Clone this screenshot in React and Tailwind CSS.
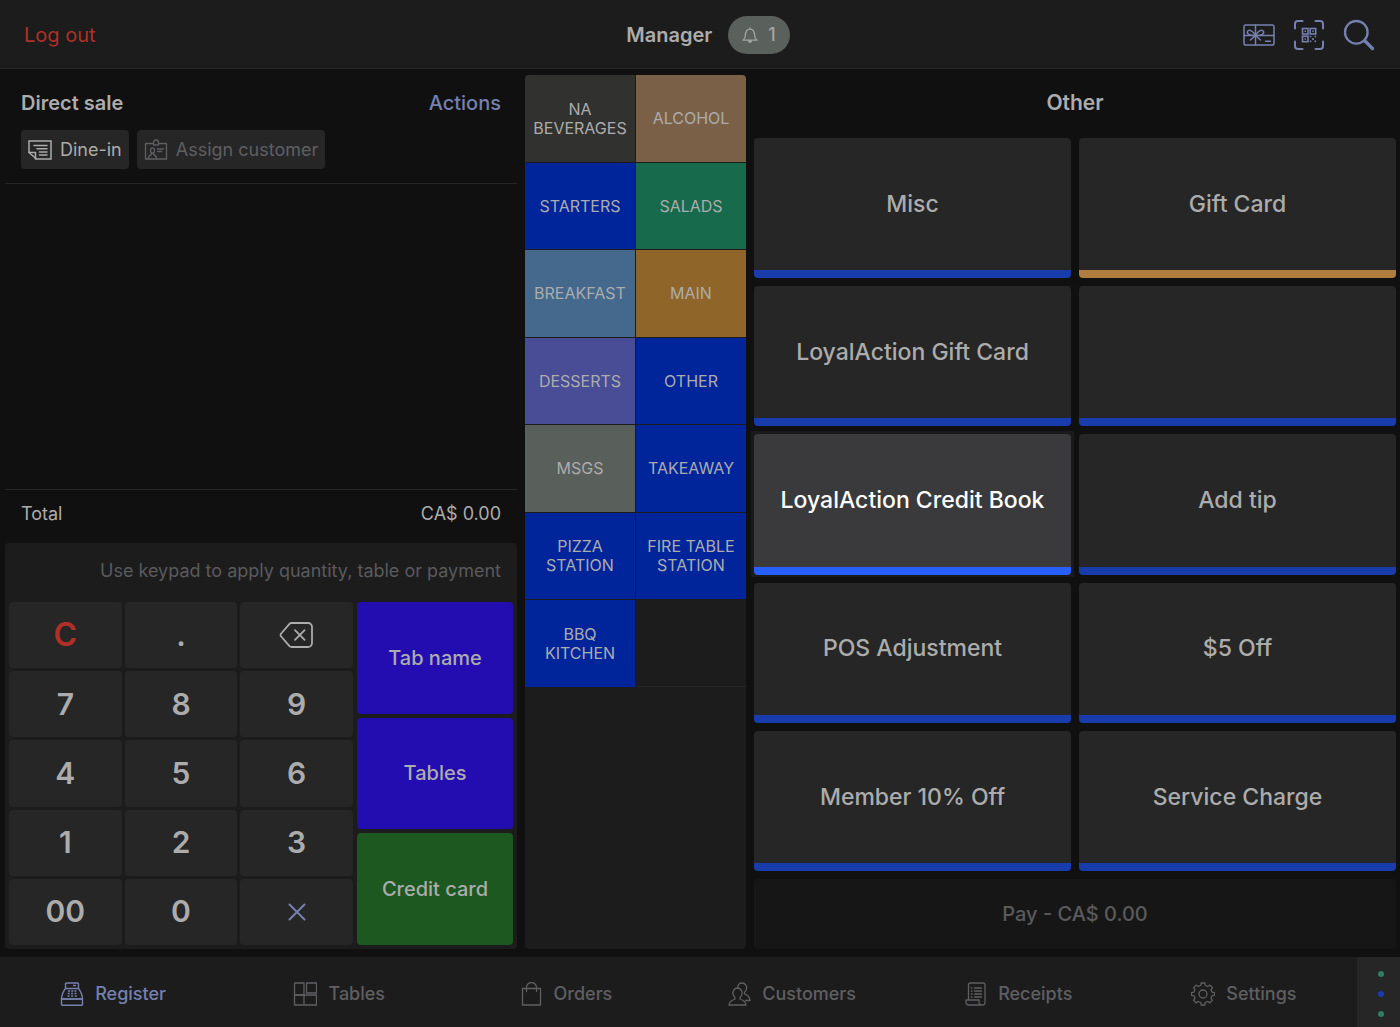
import React from "react";

function Icon({ className, viewBox = "0 0 24 24", width = 1.4, children }) {
  return (
    <svg
      className={className}
      viewBox={viewBox}
      fill="none"
      stroke="currentColor"
      strokeWidth={width}
      strokeLinecap="round"
      strokeLinejoin="round"
      aria-hidden="true"
    >
      {children}
    </svg>
  );
}

const BellIcon = () => (
  <Icon className="h-4 w-4" viewBox="0 0 16 16" width={1.3}>
    <path d="M8 1v1M1 13.2h14c-1.7-1.3-2.2-2.4-2.3-4.4C12.5 5 11.2 2.2 8 2.2S3.500 5 3.300 8.800C3.200 10.800 2.700 11.900 1 13.200z" />
    <path d="M6.5 13.800a1.500 1.500 0 0 0 3 0z" fill="currentColor" />
  </Icon>
);

const GiftCardIcon = () => (
  <Icon className="h-6 w-8" viewBox="0 0 32 24" width={1.5}>
    <rect x="1" y="2" width="30" height="20" rx="1.8" />
    <path d="M12.5 2v20M1 12.5h30" />
    <path d="M12.5 12.5C10 7.500 5.500 6 4.500 8.500s3 4.500 8 4zM12.500 12.500C15 7.500 19.500 6 20.500 8.500s-3 4.500-8 4z" />
    <path d="M12.5 12.5l-5 4.500M12.500 12.500l5 4.500M22.500 18.300h5" />
  </Icon>
);

const QrIcon = () => (
  <Icon className="h-8 w-8" viewBox="0 0 32 32" width={2}>
    <path d="M2 9.5V5a3 3 0 0 1 3-3h4.500M22.500 2H27a3 3 0 0 1 3 3v4.500M30 22.500V27a3 3 0 0 1-3 3h-4.500M9.500 30H5a3 3 0 0 1-3-3v-4.500" />
    <g strokeWidth="1.6" strokeLinejoin="miter">
      <rect x="9.5" y="9.5" width="5.5" height="5.5" />
      <rect x="17.2" y="9.5" width="5.5" height="5.5" />
      <rect x="9.5" y="17.2" width="5.5" height="5.5" />
    </g>
    <g fill="currentColor" stroke="none">
      <rect x="11.5" y="11.5" width="1.5" height="1.5" />
      <rect x="19.2" y="11.5" width="1.5" height="1.5" />
      <rect x="11.5" y="19.2" width="1.5" height="1.5" />
      <rect x="16.7" y="16.7" width="1.6" height="1.6" />
      <rect x="21.5" y="16.7" width="1.6" height="1.6" />
      <rect x="19.1" y="19.1" width="1.8" height="1.8" />
      <rect x="16.7" y="21.5" width="1.6" height="1.6" />
      <rect x="21.5" y="21.5" width="1.6" height="1.6" />
    </g>
  </Icon>
);

const SearchIcon = () => (
  <Icon className="h-8 w-8" viewBox="0 0 32 32" width={2.3}>
    <circle cx="13.3" cy="13.3" r="11.3" />
    <path d="M22 22l7.500 7.500" strokeWidth="3.2" />
  </Icon>
);

const NoteIcon = () => (
  <Icon className="h-6 w-6" width={1.5}>
    <path d="M1 3h22v18H8.500L1 14.500z" strokeLinejoin="miter" />
    <path d="M1 14.5h6.500V21M6 7.500h13M9 10.700h10M11.500 13.900H19M11.500 17.100H19" />
  </Icon>
);

const BadgeIcon = () => (
  <Icon className="h-6 w-6" width={1.3}>
    <path d="M9.5 5.500H1.500v15.500h21V5.500h-8" />
    <path d="M9.5 7V4.500a2.500 2.500 0 0 1 5 0V7z" />
    <path d="M13.5 11h6M13.500 13.500h4" />
    <ellipse cx="8.5" cy="12.5" rx="2" ry="2.6" />
    <path d="M4.5 20.500c0-3 1.500-3.600 3-4.200v-1.500M9.500 14.800v1.500c1.500.6 3 1.200 3 4.200" />
  </Icon>
);

const BackspaceIcon = () => (
  <Icon className="h-7 w-9" viewBox="0 0 36 28" width={1.8}>
    <path d="M12.500 2H29a4 4 0 0 1 4 4v16a4 4 0 0 1-4 4H12.500a3 3 0 0 1-2-.8L2.200 15.500a2 2 0 0 1 0-3L10.500 2.800a3 3 0 0 1 2-.8z" />
    <path d="M16 9.200l9.600 9.600M25.600 9.200L16 18.800" />
  </Icon>
);

const TimesIcon = () => (
  <Icon className="h-5 w-5" viewBox="0 0 20 20" width={2}>
    <path d="M2.500 2.500l15 15M17.500 2.500l-15 15" />
  </Icon>
);

const RegisterIcon = () => (
  <Icon className="h-6 w-6" width={1.4}>
    <path d="M5.500 6.500V2a1 1 0 0 1 1-1h11a1 1 0 0 1 1 1v4.500M5.500 6.500h13c2.500 3 3.700 6.500 4 10.500h-21c.3-4 1.500-7.500 4-10.500z" />
    <path d="M1.500 17h21v5.500a.7.700 0 0 1-.7.700H2.200a.7.700 0 0 1-.7-.700zM13.500 3.500h2" />
    <path
      d="M8 9h2M11.200 9h2M14.400 9h2M7.700 11.500h2M11.100 11.500h2M14.500 11.500h2M7.500 14h2M11.100 14h2M14.800 14h2"
      strokeLinecap="butt"
    />
  </Icon>
);

const TablesIcon = () => (
  <Icon className="h-6 w-6" width={1.3}>
    <rect x="1.500" y="1" width="9.500" height="12" />
    <rect x="13.500" y="1" width="10" height="10" />
    <path d="M1.500 13h22v10h-22zM11 13v10" />
  </Icon>
);

const OrdersIcon = () => (
  <Icon className="h-6 w-6" width={1.3}>
    <path d="M3.500 6.500h18V23h-18zM7.500 9.500V5.500a5 5 0 0 1 10 0v4" />
  </Icon>
);

const CustomersIcon = () => (
  <Icon className="h-6 w-6" width={1.3}>
    <path d="M10.500 6C7 6 5.500 9.500 6 12c.3 1.600 1 2.700 2 3.500v1.500c-3 1-5.500 2-6 6h17c-.5-4-3-5-6-6v-1.500c1-.8 1.700-1.900 2-3.500.5-2.500-1-6-4.500-6z" />
    <path d="M10.500 6c.2-3 2-5 4.500-5 3.500 0 5 3 4.500 5.800-.3 1.700-1 2.700-2 3.500v1.500c3 1 5.200 2.700 5.500 6.700h-4.500" />
  </Icon>
);

const ReceiptsIcon = () => (
  <Icon className="h-6 w-6" width={1.3}>
    <path d="M5.500 18V3a2 2 0 0 1 2-2H20a2 2 0 0 1 2 2v17.500a2.500 2.500 0 0 1-2.500 2.500H6a3 3 0 0 1-3-3v-2h13v2.200A2.800 2.800 0 0 0 19 23" />
    <path d="M11.500 6h7M11.500 9h7M11.500 12h7M11.500 15h7" />
    <path d="M8.500 6h.4M8.500 9h.4M8.500 12h.4M8.500 15h.4" strokeWidth="1.7" />
  </Icon>
);

const SettingsIcon = () => (
  <Icon className="h-6 w-6" width={1.3}>
    <circle cx="12" cy="12" r="4" />
    <path d="M9.700 3.500L10.200 1h3.600l.5 2.500 2.400 1 2.200-1.400 2.500 2.500-1.400 2.200 1 2.400 2.500.500v2.600l-2.500.500-1 2.400 1.400 2.200-2.500 2.500-2.200-1.400-2.400 1-.5 2.500h-3.600l-.5-2.500-2.400-1-2.200 1.400-2.500-2.500 1.400-2.200-1-2.400-2.500-.500v-2.600l2.500-.500 1-2.400-1.400-2.200 2.500-2.500 2.200 1.400z" />
  </Icon>
);

const categories = [
  ["NA BEVERAGES", "bg-[#31312f]"],
  ["ALCOHOL", "bg-[#7b6048]"],
  ["STARTERS", "bg-[#00259b]"],
  ["SALADS", "bg-[#176a4b]"],
  ["BREAKFAST", "bg-[#44698d]"],
  ["MAIN", "bg-[#906529]"],
  ["DESSERTS", "bg-[#494d96]"],
  ["OTHER", "bg-[#00259b]"],
  ["MSGS", "bg-[#595f5a]"],
  ["TAKEAWAY", "bg-[#00259b]"],
  ["PIZZA STATION", "bg-[#00259b]"],
  ["FIRE TABLE STATION", "bg-[#00259b]"],
  ["BBQ KITCHEN", "bg-[#00259b]"],
];

const products = [
  { name: "Misc" },
  { name: "Gift Card", strip: "border-[#b17d3e]" },
  { name: "LoyalAction Gift Card" },
  { name: "" },
  { name: "LoyalAction Credit Book", active: true },
  { name: "Add tip" },
  { name: "POS Adjustment" },
  { name: "$5 Off" },
  { name: "Member 10% Off" },
  { name: "Service Charge" },
];

const keys = [
  { label: "Clear", content: "C", tone: "text-[#b03028] text-[32px] font-bold" },
  { label: "Decimal point", content: "." },
  { label: "Backspace", content: <BackspaceIcon /> },
  { content: "7" },
  { content: "8" },
  { content: "9" },
  { content: "4" },
  { content: "5" },
  { content: "6" },
  { content: "1" },
  { content: "2" },
  { content: "3" },
  { content: "00" },
  { content: "0" },
  { label: "Multiply", content: <TimesIcon />, tone: "text-[#7580b0]" },
];

const tabs = [
  ["Register", RegisterIcon],
  ["Tables", TablesIcon],
  ["Orders", OrdersIcon],
  ["Customers", CustomersIcon],
  ["Receipts", ReceiptsIcon],
  ["Settings", SettingsIcon],
];

function TopBar() {
  return (
    <header className="grid h-[69px] shrink-0 grid-cols-[1fr_auto_1fr] items-center border-b border-[#252525] bg-[#1c1c1c] px-6 pt-px">
      <button className="justify-self-start text-xl text-[#b03028]">Log out</button>
      <div className="flex items-center gap-4 pl-4">
        <h1 className="text-xl font-semibold">Manager</h1>
        <button
          aria-label="1 notification"
          className="flex h-[38px] items-center gap-2.5 rounded-full bg-[#5a605b] px-3.5 text-lg font-medium text-[#a4a4a4]"
        >
          <BellIcon />
          <span>1</span>
        </button>
      </div>
      <div className="flex items-center gap-[18px] justify-self-end pr-px text-[#7580b0]">
        <button aria-label="Gift cards"><GiftCardIcon /></button>
        <button aria-label="Scan code"><QrIcon /></button>
        <button aria-label="Search"><SearchIcon /></button>
      </div>
    </header>
  );
}

function Keypad() {
  return (
    <div className="flex flex-col rounded bg-[#1c1c1c] p-1">
      <input
        readOnly
        aria-label="Keypad entry"
        placeholder="Use keypad to apply quantity, table or payment"
        className="mb-2 h-[47px] bg-transparent px-3 text-right text-lg outline-none placeholder:text-[#5a5a5c]"
      />
      <div className="grid h-[343px] grid-cols-[344fr_156fr] gap-1">
        <div className="grid grid-cols-3 grid-rows-5 gap-[3px]">
          {keys.map(({ label, content, tone = "text-[30px]" }, i) => (
            <button
              key={i}
              aria-label={label}
              className={"flex items-center justify-center rounded bg-[#262626] font-semibold " + tone}
            >
              {content}
            </button>
          ))}
        </div>
        <div className="grid grid-rows-3 gap-1 text-xl font-medium">
          <button className="rounded bg-[#240db0]">Tab name</button>
          <button className="rounded bg-[#240db0]">Tables</button>
          <button className="rounded bg-[#1c5820]">Credit card</button>
        </div>
      </div>
    </div>
  );
}

function SalePanel() {
  return (
    <section className="flex flex-col">
      <div className="flex h-[55px] items-center justify-between px-4 text-xl">
        <h2 className="font-semibold">Direct sale</h2>
        <button className="font-medium text-[#7580b0]">Actions</button>
      </div>
      <div className="flex gap-2 border-b border-[#262626] px-4 pb-3.5 text-lg">
        <button className="flex h-[39px] items-center gap-2 rounded bg-[#262626] px-[7px]">
          <NoteIcon />
          Dine-in
        </button>
        <button className="flex h-[39px] items-center gap-2 rounded bg-[#262626] px-[7px] text-[#5f5f61]">
          <BadgeIcon />
          Assign customer
        </button>
      </div>
      <div className="flex-1" />
      <div className="flex h-[54px] justify-between border-t border-[#262626] px-4 pt-2.5 text-lg">
        <span>Total</span>
        <span>CA$ 0.00</span>
      </div>
      <Keypad />
    </section>
  );
}

function Categories() {
  return (
    <nav
      aria-label="Categories"
      className="grid grid-cols-2 grid-rows-10 gap-px overflow-hidden rounded bg-[#1c1c1c]"
    >
      {categories.map(([name, color]) => (
        <button key={name} className={"px-1 pt-px text-base leading-[19px] " + color}>
          {name}
        </button>
      ))}
      <div className="border-b border-[#262626]" />
    </nav>
  );
}

function Products() {
  return (
    <section className="flex flex-col">
      <h2 className="flex h-[63px] items-center justify-center pb-2 text-[21px] font-semibold">Other</h2>
      <div className="isolate grid flex-1 grid-cols-2 grid-rows-5 gap-2 text-[23px] font-medium">
        {products.map(({ name, strip = "border-[#183cac]", active }, i) => (
          <button
            key={i}
            aria-label={name || "Empty slot"}
            className={
              active
                ? "relative rounded border-b-8 border-[#2860ff] bg-[#3a3a3c] text-white before:absolute before:-inset-x-[3px] before:-top-[3px] before:-bottom-[10px] before:-z-10 before:bg-[#1a1a1a]"
                : "rounded border-b-8 bg-[#262626] " + strip
            }
          >
            {name}
          </button>
        ))}
      </div>
      <button disabled className="mt-2 h-[70px] rounded bg-[#161616] text-xl font-medium text-[#5a5a5c]">
        Pay - CA$ 0.00
      </button>
    </section>
  );
}

function TabBar() {
  return (
    <footer className="flex h-[70px] shrink-0 bg-[#1c1c1c]">
      <nav className="flex flex-1 pt-1">
        {tabs.map(([name, TabIcon], i) => (
          <a
            key={name}
            href={"#" + name.toLowerCase()}
            className={
              "flex flex-1 items-center justify-center gap-[11px] text-lg font-medium " +
              (i === 0 ? "text-[#7580b0]" : "text-[#5f5f61]")
            }
          >
            <TabIcon />
            {name}
          </a>
        ))}
      </nav>
      <button
        aria-label="Status"
        className="flex w-[43px] flex-col items-center justify-center gap-3.5 bg-[#262626] pt-1 pl-1"
      >
        <span className="h-1.5 w-1.5 rounded-full bg-[#2f7d62]" />
        <span className="h-1.5 w-1.5 rounded-full bg-[#183cac]" />
        <span className="h-1.5 w-1.5 rounded-full bg-[#2f7d62]" />
      </button>
    </footer>
  );
}

export default function App() {
  return (
    <div className="flex min-h-screen flex-col bg-[#101010] font-['Inter',sans-serif] text-[#acacac]">
      <TopBar />
      <main className="grid flex-1 grid-cols-[512fr_221fr_642fr] gap-2 pt-1.5 pr-1 pb-2 pl-[5px]">
        <SalePanel />
        <Categories />
        <Products />
      </main>
      <TabBar />
    </div>
  );
}
